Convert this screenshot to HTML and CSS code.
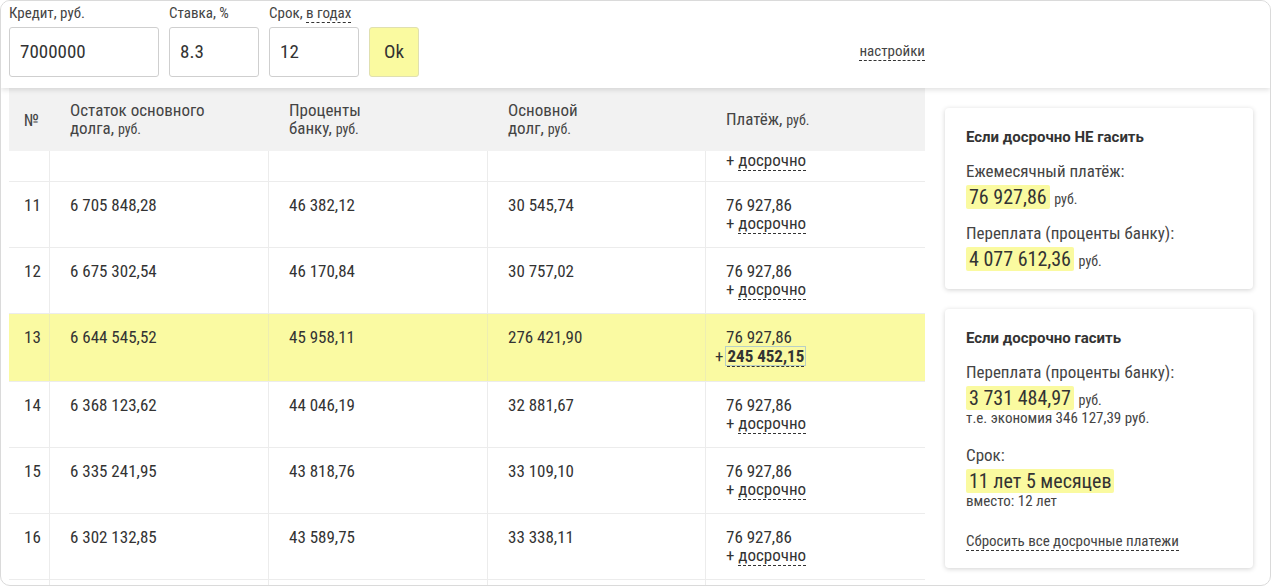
FILE: index.html
```html
<!DOCTYPE html>
<html lang="ru">
<head>
<meta charset="utf-8">
<title>Кредитный калькулятор</title>
<link rel="stylesheet" href="styles.css">
</head>
<body>
<div class="app">
  <div class="topbar">
    <div class="form">
      <div class="field">
        <div class="label">Кредит, руб.</div>
        <div class="input w-wide">7000000</div>
      </div>
      <div class="field">
        <div class="label">Ставка, %</div>
        <div class="input w-narrow">8.3</div>
      </div>
      <div class="field">
        <div class="label">Срок, <span class="dash">в годах</span></div>
        <div class="input w-narrow">12</div>
      </div>
      <div class="field">
        <div class="label">&nbsp;</div>
        <div class="btn">Ok</div>
      </div>
      <div class="settings"><span class="dash">настройки</span></div>
    </div>
  </div>
  <div class="main">
    <div class="table">
      <div class="thead row">
        <div class="cell c-num">№</div>
        <div class="cell">Остаток основного<br>долга, <small>руб.</small></div>
        <div class="cell">Проценты<br>банку, <small>руб.</small></div>
        <div class="cell">Основной<br>долг, <small>руб.</small></div>
        <div class="cell">Платёж, <small>руб.</small></div>
      </div>
      <div class="tbody">
        <div class="row cut">
          <div class="cell c-num"></div>
          <div class="cell"></div>
          <div class="cell"></div>
          <div class="cell"></div>
          <div class="cell">+ <span class="dash">досрочно</span></div>
        </div>
        <div class="row">
          <div class="cell c-num">11</div>
          <div class="cell">6 705 848,28</div>
          <div class="cell">46 382,12</div>
          <div class="cell">30 545,74</div>
          <div class="cell">76 927,86<br>+ <span class="dash">досрочно</span></div>
        </div>
        <div class="row">
          <div class="cell c-num">12</div>
          <div class="cell">6 675 302,54</div>
          <div class="cell">46 170,84</div>
          <div class="cell">30 757,02</div>
          <div class="cell">76 927,86<br>+ <span class="dash">досрочно</span></div>
        </div>
        <div class="row hl">
          <div class="cell c-num">13</div>
          <div class="cell">6 644 545,52</div>
          <div class="cell">45 958,11</div>
          <div class="cell">276 421,90</div>
          <div class="cell">76 927,86<br><span class="plus">+</span><span class="extra"><span class="dash">245 452,15</span></span></div>
        </div>
        <div class="row">
          <div class="cell c-num">14</div>
          <div class="cell">6 368 123,62</div>
          <div class="cell">44 046,19</div>
          <div class="cell">32 881,67</div>
          <div class="cell">76 927,86<br>+ <span class="dash">досрочно</span></div>
        </div>
        <div class="row">
          <div class="cell c-num">15</div>
          <div class="cell">6 335 241,95</div>
          <div class="cell">43 818,76</div>
          <div class="cell">33 109,10</div>
          <div class="cell">76 927,86<br>+ <span class="dash">досрочно</span></div>
        </div>
        <div class="row">
          <div class="cell c-num">16</div>
          <div class="cell">6 302 132,85</div>
          <div class="cell">43 589,75</div>
          <div class="cell">33 338,11</div>
          <div class="cell">76 927,86<br>+ <span class="dash">досрочно</span></div>
        </div>
        <div class="row tail">
          <div class="cell c-num"></div>
          <div class="cell"></div>
          <div class="cell"></div>
          <div class="cell"></div>
          <div class="cell"></div>
        </div>
      </div>
    </div>
    <div class="side">
      <div class="card">
        <div class="card-title">Если досрочно НЕ гасить</div>
        <div class="lbl">Ежемесячный платёж:</div>
        <div class="val"><span class="mark">76 927,86</span> <small>руб.</small></div>
        <div class="lbl gap">Переплата (проценты банку):</div>
        <div class="val"><span class="mark">4 077 612,36</span> <small>руб.</small></div>
      </div>
      <div class="card">
        <div class="card-title">Если досрочно гасить</div>
        <div class="lbl">Переплата (проценты банку):</div>
        <div class="val"><span class="mark">3 731 484,97</span> <small>руб.</small></div>
        <div class="note">т.е. экономия 346 127,39 руб.</div>
        <div class="lbl gap2">Срок:</div>
        <div class="val"><span class="mark">11 лет 5 месяцев</span></div>
        <div class="note">вместо: 12 лет</div>
        <div class="reset"><span class="dash">Сбросить все досрочные платежи</span></div>
      </div>
    </div>
  </div>
</div>
</body>
</html>
```

FILE: styles.css
```css
* { box-sizing: border-box; }
html, body { margin: 0; padding: 0; background: #fff; }
body {
  font-family: Roboto, "Liberation Sans", sans-serif;
  font-stretch: condensed;
  color: #333;
  font-size: 16px;
}
.app {
  width: 1271px;
  height: 586px;
  border: 1px solid #dadada;
  border-radius: 10px;
  overflow: hidden;
  display: flex;
  flex-direction: column;
}
.topbar {
  height: 87px;
  flex: none;
  background: #fff;
  position: relative;
  z-index: 2;
  box-shadow: 0 2px 5px rgba(0,0,0,0.12);
  padding: 4px 0 0 8px;
}
.form {
  width: 916px;
  display: flex;
  gap: 10px;
  align-items: flex-start;
}
.field { display: flex; flex-direction: column; }
.label {
  font-size: 15px;
  line-height: 17px;
  color: #444;
  margin-bottom: 5px;
}
.input {
  height: 50px;
  border: 1px solid #cfcfcf;
  border-radius: 3px;
  font-size: 19px;
  line-height: 48px;
  padding: 0 10px;
  color: #333;
}
.w-wide { width: 150px; }
.w-narrow { width: 90px; }
.btn {
  width: 50px;
  height: 50px;
  border: 1px solid #e0e0b0;
  border-radius: 3px;
  background: #fafaa0;
  font-size: 19px;
  line-height: 48px;
  text-align: center;
  color: #333;
}
.settings {
  margin-left: auto;
  margin-top: 37px;
  font-size: 15px;
  line-height: 18px;
  color: #444;
}
.dash { border-bottom: 1px dashed #333; }
.main {
  flex: 1;
  display: flex;
  min-height: 0;
}
.table {
  width: 916px;
  margin-left: 8px;
  display: flex;
  flex-direction: column;
  min-height: 0;
}
.row {
  display: grid;
  grid-template-columns: 41px 219px 219px 218px 219px;
  border-bottom: 1px solid #ececec;
}
.thead {
  height: 63px;
  flex: none;
  background: #f2f2f2;
  border-bottom: none;
  align-items: center;
  color: #444;
}
.thead .cell {
  padding: 0 20px;
  border-right: none;
  line-height: 18px;
  font-size: 17px;
}
.thead .c-num { padding: 0 0 0 15px; }
small { font-size: 14px; }
.tbody {
  flex: 1;
  overflow: hidden;
  min-height: 0;
}
.cell {
  padding: 14px 20px 15px;
  line-height: 18px;
  font-size: 17px;
  border-right: 1px solid #ececec;
}
.cell:last-child { border-right: none; }
.cell.c-num { padding-left: 15px; padding-right: 0; }
.row.cut { height: 31px; }
.row.cut .cell { padding-top: 0; padding-bottom: 0; }
.row.tail { height: 40px; }
.hl { background: #fafaa2; }
.hl .cell { border-right-color: #eeeeb0; }
.plus { margin-left: -11px; margin-right: 2px; }
.extra {
  display: inline-block;
  border: 1px solid #b8cfc6;
  padding: 0 1px;
  font-weight: bold;
  line-height: 18px;
}
.side {
  flex: 1;
  padding: 20px 17px 0 20px;
  display: flex;
  flex-direction: column;
  gap: 20px;
}
.card {
  background: #fff;
  border-radius: 4px;
  box-shadow: 0 1px 5px rgba(0,0,0,0.18);
  padding: 19px 20px 18px 21px;
}
.card-title {
  font-weight: bold;
  font-stretch: 100%;
  font-size: 15px;
  line-height: 20px;
  margin-bottom: 17px;
  color: #333;
}
.lbl {
  font-size: 17px;
  line-height: 15px;
  padding-bottom: 3px;
  color: #444;
}
.lbl.gap { margin-top: 17px; }
.lbl.gap2 { margin-top: 22px; }
.val {
  margin-top: 3px;
  font-size: 20px;
  line-height: 24px;
  height: 24px;
}
.val small { font-size: 14px; color: #444; line-height: 1; }
.mark {
  background: #fafaa0;
  padding: 0 3px;
  border-radius: 2px;
}
.note {
  font-size: 15px;
  line-height: 16px;
  color: #444;
}
.reset {
  margin-top: 23px;
  font-size: 15px;
  line-height: 18px;
  color: #444;
}
```
